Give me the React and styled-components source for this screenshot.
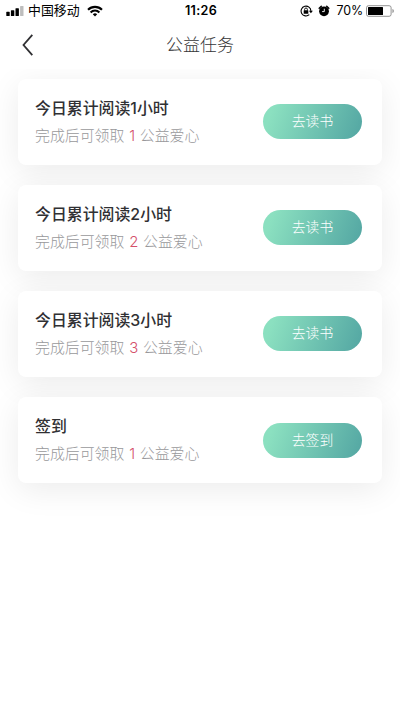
import styled, { createGlobalStyle } from 'styled-components'


const GlobalStyle = createGlobalStyle`
  * {
    box-sizing: border-box;
  }

  body {
    margin: 0;
    background: #fff;
    font-family: Inter, 'Noto Sans CJK SC', sans-serif;
  }
`

const Page = styled.div`
  min-height: 711px;
  overflow: hidden;
  background: #fff;
`

const Top = styled.div`
  position: relative;
  z-index: 1;
  height: 69px;
  background: #fff;
`

const StatusBar = styled.div`
  height: 22px;
  padding: 0 5px 0 6px;
  display: grid;
  grid-template-columns: 1fr auto 1fr;
  align-items: center;
  color: #000;
  font-size: 12.5px;
  line-height: 22px;
`

const StatusSide = styled.div`
  display: flex;
  align-items: center;
  justify-content: ${props => props.$end ? 'flex-end' : 'flex-start'};

  svg {
    display: block;
    flex: none;
  }
`

const Carrier = styled.span`
  margin: 0 7px 0 4px;
  font-size: 12.9px;
`

const Time = styled.span`
  padding-left: 1px;
  font-size: 12.6px;
  font-weight: 600;
  letter-spacing: 0.3px;
`

const StatusIcons = styled.div`
  display: flex;
  align-items: center;
  gap: 5px;
`

const Percent = styled.span`
  margin: 0 3px 0 6px;
  font-size: 12.4px;
  letter-spacing: -0.1px;
`

const NavBar = styled.header`
  height: 46px;
  padding: 0 22px;
  display: grid;
  grid-template-columns: 40px 1fr 40px;
  align-items: center;
`

const BackButton = styled.button`
  padding: 0;
  border: 0;
  background: none;

  svg {
    display: block;
  }
`

const NavTitle = styled.h1`
  margin: 0;
  color: #343436;
  font-size: 17px;
  font-weight: 300;
  line-height: 24px;
  text-align: center;
`

const TaskList = styled.main`
  padding: 9.6px 18px 0;
  display: grid;
  grid-gap: 20.2px;
`

const Card = styled.section`
  height: 86px;
  padding: 0 20px 0 17px;
  display: flex;
  align-items: center;
  justify-content: space-between;
  border-radius: 8px;
  background: #fff;
  box-shadow: 0 7px 32px rgba(0, 0, 0, 0.08);
`

const TaskTitle = styled.h2`
  margin: 1px 0 3px;
  color: #303033;
  font-size: 15.9px;
  font-weight: 500;
  line-height: 24px;
`

const TaskText = styled.p`
  margin: 0;
  color: #98989b;
  font-size: 14.9px;
  font-weight: 300;
  line-height: 24px;
  word-spacing: 0.6px;
`

const Count = styled.span`
  color: #d4506a;
`

const GoButton = styled.button`
  width: 99px;
  height: 35px;
  padding: 0 0 3px;
  border: 0;
  border-radius: 18px;
  background: linear-gradient(110deg, #8be0c0 10%, #56a9a4 95%);
  color: #fff;
  font-family: inherit;
  font-size: 13.8px;
  font-weight: 300;
`

const tasks = [
  { title: '今日累计阅读1小时', count: 1, action: '去读书' },
  { title: '今日累计阅读2小时', count: 2, action: '去读书' },
  { title: '今日累计阅读3小时', count: 3, action: '去读书' },
  { title: '签到', count: 1, action: '去签到' },
]

const SignalIcon = () => (
  <svg width="18" height="10" viewBox="0 0 18 10">
    <rect x="0.3" y="5.8" width="3.4" height="4.2" rx="0.6" />
    <rect x="4.9" y="4.2" width="3.4" height="5.8" rx="0.6" />
    <rect x="9.5" y="2.2" width="3.4" height="7.8" rx="0.6" />
    <rect x="14.1" y="0" width="3.4" height="10" rx="0.6" fill="#bdbdbd" />
  </svg>
)

const WifiIcon = () => (
  <svg width="16" height="12" viewBox="0 0 16 12" fill="none" stroke="#000" strokeWidth="2.1">
    <path d="M1 4.7a10 10 0 0 1 14 0" />
    <path d="M3.6 7.4a6.2 6.2 0 0 1 8.8 0" />
    <path d="M5.8 9.3a3.1 3.1 0 0 1 4.4 0L8 11.5z" fill="#000" stroke="none" />
  </svg>
)

const LockIcon = () => (
  <svg width="13" height="12" viewBox="0 0 13 12">
    <path d="M9.3 9.7A4.9 4.9 0 1 1 10.9 6" fill="none" stroke="#000" strokeWidth="1.1" />
    <path d="M8.9 5.7h4l-2 2.6z" />
    <rect x="3.7" y="5.3" width="4.6" height="3.5" rx="0.4" />
    <path d="M4.6 5.5V4.4a1.4 1.4 0 0 1 2.8 0v1.1" fill="none" stroke="#000" strokeWidth="0.9" />
  </svg>
)

const AlarmIcon = () => (
  <svg width="12" height="12" viewBox="0 0 12 12">
    <circle cx="6" cy="6.3" r="4.9" />
    <path d="M1.2 3.2l2.1-1.9M10.8 3.2L8.7 1.3" stroke="#000" strokeWidth="1.5" strokeLinecap="round" />
    <path d="M6.3 3.7v2.9H4.1" fill="none" stroke="#fff" strokeWidth="0.9" />
  </svg>
)

const BatteryIcon = () => (
  <svg width="29" height="12" viewBox="0 0 29 12">
    <rect x="0.5" y="0.7" width="24.6" height="10.6" rx="2" fill="none" stroke="#777" strokeWidth="0.8" />
    <rect x="2" y="2.1" width="15" height="7.8" rx="0.5" />
    <path d="M26.4 4v4c1-.3 1.5-1.1 1.5-2s-.5-1.7-1.5-2z" fill="#999" />
  </svg>
)

function App() {
  return (
    <Page>
      <GlobalStyle />
      <Top>
        <StatusBar>
          <StatusSide>
            <SignalIcon />
            <Carrier>中国移动</Carrier>
            <WifiIcon />
          </StatusSide>
          <Time>11:26</Time>
          <StatusSide $end>
            <StatusIcons>
              <LockIcon />
              <AlarmIcon />
            </StatusIcons>
            <Percent>70%</Percent>
            <BatteryIcon />
          </StatusSide>
        </StatusBar>
        <NavBar>
          <BackButton aria-label="返回">
            <svg width="12" height="22" viewBox="0 0 12 22" fill="none" stroke="#303033" strokeWidth="1.8">
              <path d="M10.3 0.8L1.5 11l8.8 10.2" />
            </svg>
          </BackButton>
          <NavTitle>公益任务</NavTitle>
        </NavBar>
      </Top>
      <TaskList>
        {tasks.map(task => (
          <Card key={task.title}>
            <div>
              <TaskTitle>{task.title}</TaskTitle>
              <TaskText>
                完成后可领取 <Count>{task.count}</Count> 公益爱心
              </TaskText>
            </div>
            <GoButton>{task.action}</GoButton>
          </Card>
        ))}
      </TaskList>
    </Page>
  );
}

export default App;
